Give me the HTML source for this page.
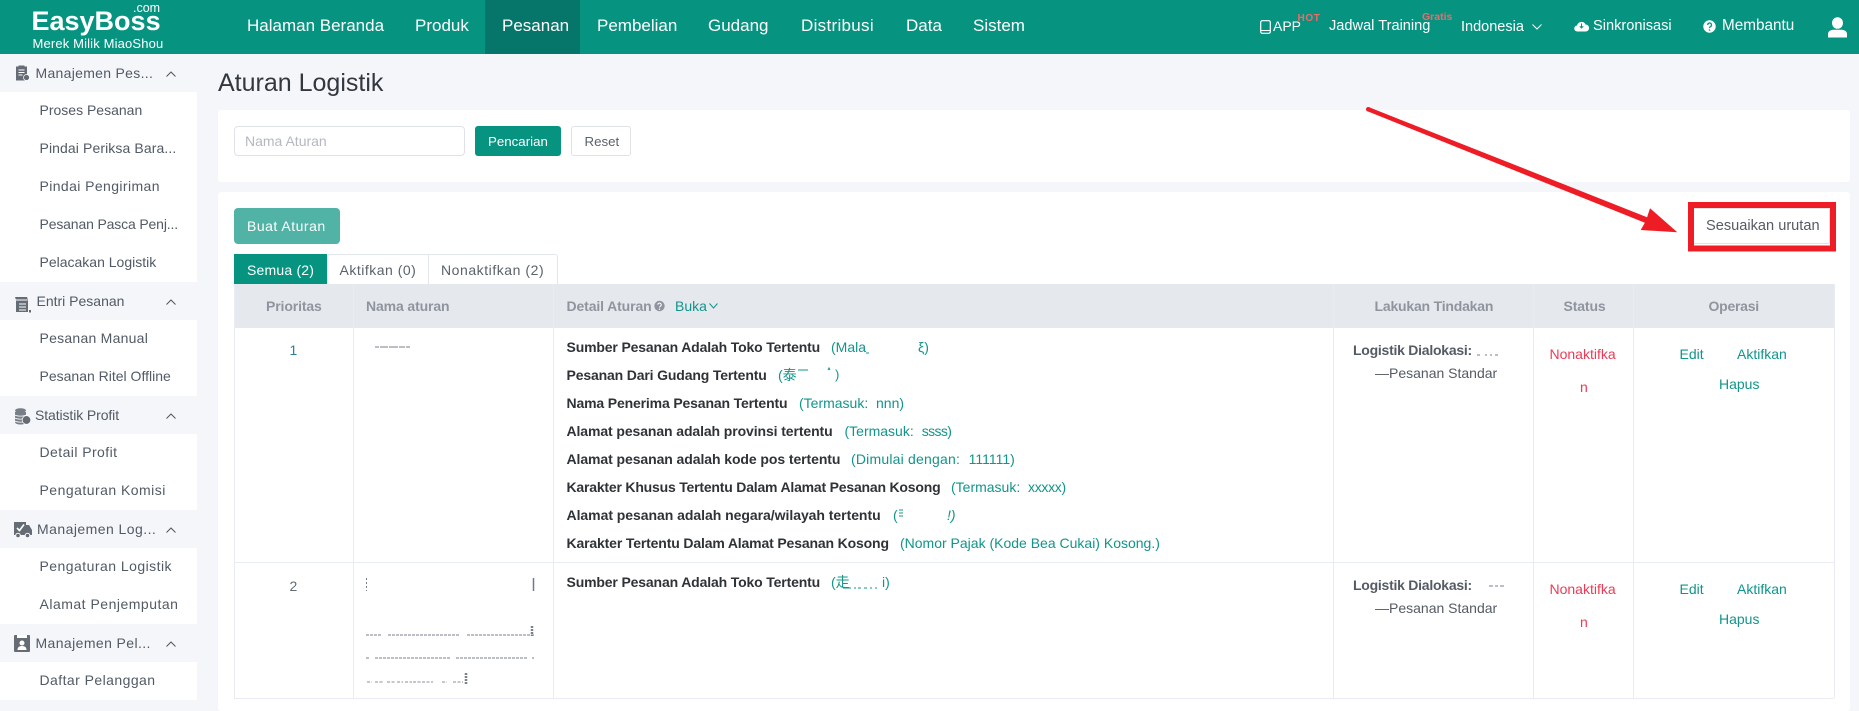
<!DOCTYPE html>
<html lang="id">
<head>
<meta charset="utf-8">
<title>Aturan Logistik</title>
<style>
*{box-sizing:border-box;margin:0;padding:0}
html,body{width:1859px;height:711px;overflow:hidden;background:#f5f6fa;font-family:"Liberation Sans","Noto Sans CJK SC",sans-serif;font-size:14px;color:#4e5661}
.a{position:absolute}
.t{position:absolute;white-space:nowrap;line-height:20px;height:20px}
.w{color:#fff}
.b{font-weight:700}
.g{color:#11958a}
.r{color:#ee3a55}
.h{font-weight:700;color:#90949e;letter-spacing:-.12px}
.d{color:#2f3338;font-weight:700;letter-spacing:-.15px}
.nav{font-size:17px;color:#fff}
.top{font-size:14.6px;color:#fff}
.card{background:#fff;border-radius:3px}
.grp{left:0;width:197px;height:38px;background:#f5f6fa}
.it{left:39.5px;color:#525a65}
.lb{color:#525a65}
.v{top:284px;width:1px;height:414px;background:#e9ecf3}
.hr{left:234px;width:1600px;height:1px;background:#e9ecf3}
svg{position:absolute;overflow:visible}
</style>
</head>
<body>
<!-- Header -->
<div class="a" style="left:0;top:0;width:1859px;height:54px;background:#069480"></div>
<div class="a" style="left:485px;top:0;width:95px;height:54px;background:#07766a"></div>
<div class="t w b" style="left:31.5px;top:8px;font-size:27px;line-height:26px;height:26px">EasyBoss</div>
<div class="t w" style="left:133px;top:-2px;font-size:12.500px">.com</div>
<div class="t w" style="left:32.500px;top:34px;font-size:13px;letter-spacing:.15px">Merek Milik MiaoShou</div>
<div class="t nav" style="left:247px;top:16px">Halaman Beranda</div>
<div class="t nav" style="left:415px;top:16px">Produk</div>
<div class="t nav" style="left:502px;top:16px">Pesanan</div>
<div class="t nav" style="left:597px;top:16px">Pembelian</div>
<div class="t nav" style="left:708px;top:16px">Gudang</div>
<div class="t nav" style="left:801px;top:16px;letter-spacing:.3px">Distribusi</div>
<div class="t nav" style="left:906px;top:16px">Data</div>
<div class="t nav" style="left:973px;top:16px">Sistem</div>

<svg style="left:1260px;top:20px" width="11" height="14" viewBox="0 0 11 14"><rect x=".7" y=".7" width="9.6" height="12.6" rx="1.500" fill="none" stroke="#fff" stroke-width="1.200"/><path d="M1 10.500h9" stroke="#fff"/></svg>
<div class="t top" style="left:1273px;top:16px;font-size:14px">APP</div>
<div class="t b" style="left:1297.500px;top:9px;font-size:10px;color:#ee6a6a;letter-spacing:.6px">HOT</div>
<div class="t top" style="left:1329px;top:16px">Jadwal Training</div>
<div class="t b" style="left:1422px;top:7px;font-size:10.500px;color:#ee6a6a">Gratis</div>
<div class="t top" style="left:1461px;top:17px;font-size:14.500px">Indonesia</div>
<svg style="left:1532px;top:24px" width="10" height="6" viewBox="0 0 10 6"><path d="M.5.500 5 5 9.500.500" fill="none" stroke="#fff"/></svg>
<svg style="left:1574px;top:20px" width="15" height="12" viewBox="0 0 15 12"><path d="M3.500 11.500a3 3 0 0 1-.5-6A4.600 4.600 0 0 1 11.600 4.500a3.500 3.500 0 0 1 0 7z" fill="#fff"/><path d="M7.500 3.500v4M5.800 6.200l1.700 1.800 1.700-1.800" stroke="#069480" fill="none"/></svg>
<div class="t top" style="left:1593px;top:16px">Sinkronisasi</div>
<svg style="left:1703px;top:20px" width="13" height="13" viewBox="0 0 13 13"><circle cx="6.500" cy="6.500" r="6.200" fill="#fff"/><path d="M4.700 5a1.900 1.900 0 1 1 2.800 1.600c-.7.400-1 .8-1 1.500" fill="none" stroke="#069480" stroke-width="1.300"/><circle cx="6.500" cy="10" r=".8" fill="#069480"/></svg>
<div class="t top" style="left:1722px;top:16px;font-size:15.300px">Membantu</div>
<svg style="left:1828px;top:16.500px" width="19" height="21" viewBox="0 0 19 21"><ellipse cx="9.500" cy="6" rx="5.500" ry="5.800" fill="#fff"/><path d="M0 20.500v-3.500C0 14 3 12.700 6 12.700h7c3 0 6 1.300 6 4.300v3.500z" fill="#fff"/></svg>

<!-- Sidebar -->
<div class="a" style="left:0;top:54px;width:197px;height:657px;background:#fff"></div>
<div class="a grp" style="top:54px"></div>
<div class="a grp" style="top:282px"></div>
<div class="a grp" style="top:396px"></div>
<div class="a grp" style="top:510px"></div>
<div class="a grp" style="top:624px"></div>
<div class="a grp" style="top:700px;height:11px"></div>

<svg style="left:14.500px;top:65px" width="15" height="16" viewBox="0 0 15 16"><path d="M1 1.500h2.500V.5h6v1H12v14H1z" fill="#666c75"/><path d="M3.500 5h6M3.500 7.500h6M3.500 10h4" stroke="#fff"/><circle cx="11.500" cy="12.500" r="3" fill="#666c75" stroke="#fff" stroke-width=".7"/></svg>
<div class="t lb" style="left:35.500px;top:63px;letter-spacing:.3px">Manajemen Pes...</div>
<svg style="left:14px;top:296px" width="17" height="17" viewBox="0 0 17 17"><path d="M1 1h12l1 3v12H2V4z" fill="#666c75"/><path d="M1.500 4h12M5 8h7M5 11h7M5 14h7" stroke="#fff"/><rect x="15" y="14" width="2" height="2.500" fill="#666c75"/></svg>
<div class="t lb" style="left:36.500px;top:291px">Entri Pesanan</div>
<svg style="left:14px;top:408px" width="17" height="17" viewBox="0 0 17 17"><ellipse cx="6.500" cy="2.500" rx="5.500" ry="2.300" fill="#787e87"/><path d="M1 4v10c0 1.500 2.500 2.500 5.500 2.500S12 15.500 12 14V4z" fill="#787e87"/><path d="M1 7c2 1.500 9 1.500 11 0M1 10c2 1.500 9 1.500 11 0M1 13c2 1.500 9 1.500 11 0" stroke="#fff" fill="none" stroke-width=".8"/><circle cx="12.500" cy="12" r="4.300" fill="#666c75" stroke="#fff" stroke-width=".7"/></svg>
<div class="t lb" style="left:35px;top:405px;letter-spacing:-.1px">Statistik Profit</div>
<svg style="left:14px;top:521px" width="18" height="17" viewBox="0 0 18 17"><path d="M0 1h12v3h3l3 5v5H0z" fill="#666c75"/><circle cx="4" cy="14.500" r="2.300" fill="#666c75" stroke="#f5f6fa"/><circle cx="13.500" cy="14.500" r="2.300" fill="#666c75" stroke="#f5f6fa"/><path d="M3 7l2.500 2.500L10 3.500" stroke="#fff" stroke-width="1.600" fill="none"/></svg>
<div class="t lb" style="left:37px;top:519px;letter-spacing:.45px">Manajemen Log...</div>
<svg style="left:14px;top:635px" width="16" height="17" viewBox="0 0 16 17"><rect width="16" height="17" rx="1" fill="#666c75"/><rect x="3" y="0" width="10" height="3" fill="#fff"/><circle cx="8" cy="8" r="2.500" fill="#fff"/><path d="M3.500 15c0-3 2-4 4.500-4s4.500 1 4.500 4z" fill="#fff"/></svg>
<div class="t lb" style="left:35.500px;top:633px;letter-spacing:.4px">Manajemen Pel...</div>

<svg style="left:166px;top:71px" width="10" height="6" viewBox="0 0 10 6"><path d="M.5 5.500 5 1l4.500 4.500" fill="none" stroke="#555"/></svg>
<svg style="left:166px;top:299px" width="10" height="6" viewBox="0 0 10 6"><path d="M.5 5.500 5 1l4.500 4.500" fill="none" stroke="#555"/></svg>
<svg style="left:166px;top:413px" width="10" height="6" viewBox="0 0 10 6"><path d="M.5 5.500 5 1l4.500 4.500" fill="none" stroke="#555"/></svg>
<svg style="left:166px;top:527px" width="10" height="6" viewBox="0 0 10 6"><path d="M.5 5.500 5 1l4.500 4.500" fill="none" stroke="#555"/></svg>
<svg style="left:166px;top:641px" width="10" height="6" viewBox="0 0 10 6"><path d="M.5 5.500 5 1l4.500 4.500" fill="none" stroke="#555"/></svg>

<div class="t it" style="top:100px">Proses Pesanan</div>
<div class="t it" style="top:138px;letter-spacing:.1px">Pindai Periksa Bara...</div>
<div class="t it" style="top:176px;letter-spacing:.4px">Pindai Pengiriman</div>
<div class="t it" style="top:214px;letter-spacing:-.15px">Pesanan Pasca Penj...</div>
<div class="t it" style="top:252px">Pelacakan Logistik</div>
<div class="t it" style="top:328px;letter-spacing:.25px">Pesanan Manual</div>
<div class="t it" style="top:366px">Pesanan Ritel Offline</div>
<div class="t it" style="top:442px;letter-spacing:.43px">Detail Profit</div>
<div class="t it" style="top:480px;letter-spacing:.47px">Pengaturan Komisi</div>
<div class="t it" style="top:556px;letter-spacing:.46px">Pengaturan Logistik</div>
<div class="t it" style="top:594px;letter-spacing:.5px">Alamat Penjemputan</div>
<div class="t it" style="top:670px;letter-spacing:.44px">Daftar Pelanggan</div>

<!-- Main -->
<div class="t" style="left:218px;top:73px;font-size:25px;color:#33383f">Aturan Logistik</div>
<div class="a card" style="left:218px;top:110px;width:1632px;height:72px"></div>
<div class="a card" style="left:218px;top:192px;width:1632px;height:519px"></div>

<div class="a" style="left:234px;top:126px;width:231px;height:30px;border:1px solid #dfe2e8;border-radius:4px;background:#fff"></div>
<div class="t" style="left:245px;top:131px;color:#b4b8bf">Nama Aturan</div>
<div class="a" style="left:475px;top:126px;width:86px;height:30px;background:#069480;border-radius:3px"></div>
<div class="t w" style="left:488px;top:132px;font-size:13.300px">Pencarian</div>
<div class="a" style="left:571px;top:126px;width:60px;height:30px;border:1px solid #dfe2e8;border-radius:3px;background:#fff"></div>
<div class="t" style="left:584.500px;top:132px;font-size:13.300px;color:#5c626b">Reset</div>

<div class="a" style="left:234px;top:208px;width:106px;height:36px;background:#50b3a6;border-radius:4px"></div>
<div class="t w" style="left:247px;top:216px;letter-spacing:.5px">Buat Aturan</div>

<div class="a" style="left:1693px;top:208px;width:137px;height:36px;border:1px solid #dfe2e8;border-radius:2px;background:#fff"></div>
<div class="t" style="left:1706px;top:216px;font-size:14.600px;color:#555b64">Sesuaikan urutan</div>

<!-- Tabs -->
<div class="a" style="left:327px;top:254px;width:231px;height:30px;border:1px solid #e3e6eb;border-bottom:0;border-radius:0 3px 0 0;background:#fff"></div>
<div class="a" style="left:428px;top:254px;width:1px;height:30px;background:#e3e6eb"></div>
<div class="a" style="left:234px;top:254px;width:93px;height:30px;background:#069480"></div>
<div class="t w" style="left:247px;top:260px;letter-spacing:.2px">Semua (2)</div>
<div class="t" style="left:339.500px;top:260px;color:#5c626b;letter-spacing:.5px">Aktifkan (0)</div>
<div class="t" style="left:441px;top:260px;color:#5c626b;letter-spacing:.55px">Nonaktifkan (2)</div>

<!-- Table -->
<div class="a" style="left:234px;top:284px;width:1600px;height:44px;background:#e5e8ed"></div>
<div class="a v" style="left:234px"></div>
<div class="a v" style="left:353px"></div>
<div class="a v" style="left:553px"></div>
<div class="a v" style="left:1333px"></div>
<div class="a v" style="left:1533px"></div>
<div class="a v" style="left:1633px"></div>
<div class="a v" style="left:1834px"></div>
<div class="a hr" style="top:562px"></div>
<div class="a hr" style="top:698px"></div>

<div class="t h" style="left:266px;top:296px">Prioritas</div>
<div class="t h" style="left:366px;top:296px">Nama aturan</div>
<div class="t h" style="left:566.500px;top:296px">Detail Aturan</div>
<svg style="left:654px;top:300px" width="11" height="12" viewBox="0 0 11 12"><circle cx="5.500" cy="6" r="5.200" fill="#90949e"/><path d="M3.800 4.800a1.700 1.700 0 1 1 2.500 1.500c-.5.300-.8.600-.8 1.200" fill="none" stroke="#fff"/><circle cx="5.500" cy="9.200" r=".7" fill="#fff"/></svg>
<div class="t g" style="left:675px;top:296px">Buka</div>
<svg style="left:709px;top:303px" width="9" height="6" viewBox="0 0 9 6"><path d="M.5.500 4.500 5 8.500.500" fill="none" stroke="#11958a"/></svg>
<div class="t h" style="left:1374.500px;top:296px;letter-spacing:-.2px">Lakukan Tindakan</div>
<div class="t h" style="left:1563.500px;top:296px">Status</div>
<div class="t h" style="left:1708.500px;top:296px;letter-spacing:-.25px">Operasi</div>

<div class="t" style="left:289.500px;top:340px;color:#2f7f9a">1</div>
<div class="t" style="left:289.500px;top:575.500px;color:#666c75">2</div>

<div class="t d" style="left:566.500px;top:337px">Sumber Pesanan Adalah Toko Tertentu</div>
<div class="t g" style="left:831px;top:337px">(Mala</div><div class="t g" style="left:918px;top:337px">ξ)</div>
<div class="t d" style="left:566.500px;top:365px">Pesanan Dari Gudang Tertentu</div>
<div class="t g" style="left:778px;top:365px">(泰</div><div class="t g" style="left:835px;top:365px;font-size:13px">)</div>
<div class="t d" style="left:566.500px;top:393px">Nama Penerima Pesanan Tertentu</div>
<div class="t g" style="left:799px;top:393px">(Termasuk:</div><div class="t g" style="left:876px;top:393px">nnn)</div>
<div class="t d" style="left:566.500px;top:421px;letter-spacing:-.1px">Alamat pesanan adalah provinsi tertentu</div>
<div class="t g" style="left:844.500px;top:421px">(Termasuk:</div><div class="t g" style="left:921.700px;top:421px;letter-spacing:-.6px">ssss)</div>
<div class="t d" style="left:566.500px;top:449px;letter-spacing:-.08px">Alamat pesanan adalah kode pos tertentu</div>
<div class="t g" style="left:851px;top:449px;letter-spacing:.2px">(Dimulai dengan:</div><div class="t g" style="left:968.600px;top:449px">111111)</div>
<div class="t d" style="left:566.500px;top:477px;letter-spacing:-.2px">Karakter Khusus Tertentu Dalam Alamat Pesanan Kosong</div>
<div class="t g" style="left:951px;top:477px">(Termasuk:</div><div class="t g" style="left:1028px;top:477px;letter-spacing:-.3px">xxxxx)</div>
<div class="t d" style="left:566.500px;top:505px;letter-spacing:-.04px">Alamat pesanan adalah negara/wilayah tertentu</div>
<div class="t g" style="left:893px;top:505px">(</div><div class="t g" style="left:947px;top:505px;font-style:italic">!)</div>
<div class="t d" style="left:566.500px;top:533px">Karakter Tertentu Dalam Alamat Pesanan Kosong</div>
<div class="t g" style="left:900px;top:533px">(Nomor Pajak (Kode Bea Cukai) Kosong.)</div>
<div class="t d" style="left:566.500px;top:572px">Sumber Pesanan Adalah Toko Tertentu</div>
<div class="t g" style="left:831px;top:572px">(走</div><div class="t g" style="left:882px;top:572px">i)</div>

<div class="t b" style="left:1353px;top:340px;color:#555b64;letter-spacing:-.25px">Logistik Dialokasi:</div>
<div class="t" style="left:1375px;top:363px;color:#555b64">—Pesanan Standar</div>
<div class="t b" style="left:1353px;top:575px;color:#555b64;letter-spacing:-.25px">Logistik Dialokasi:</div>
<div class="t" style="left:1375px;top:598px;color:#555b64">—Pesanan Standar</div>

<div class="t r" style="left:1549.500px;top:344px">Nonaktifka</div>
<div class="t r" style="left:1580px;top:377px">n</div>
<div class="t r" style="left:1549.500px;top:579px">Nonaktifka</div>
<div class="t r" style="left:1580px;top:612px">n</div>

<div class="t g" style="left:1679.500px;top:344px">Edit</div>
<div class="t g" style="left:1737px;top:344px">Aktifkan</div>
<div class="t g" style="left:1719px;top:374px">Hapus</div>
<div class="t g" style="left:1679.500px;top:579px">Edit</div>
<div class="t g" style="left:1737px;top:579px">Aktifkan</div>
<div class="t g" style="left:1719px;top:609px">Hapus</div>

<!-- Overlay: redaction fragments and red annotation -->
<svg style="left:0;top:0" width="1859" height="711" viewBox="0 0 1859 711">
<g fill="none" stroke="#7a818c" stroke-width="1">
<path d="M375 347h35" stroke-dasharray="4 1 8 1 9 1 6 1"/>
<path d="M366.500 578v13" stroke-dasharray="2 2"/>
<path d="M533.500 578v13" stroke="#6b7c90" stroke-width="1.500"/>
<path d="M366 635h16M388 635h72M467 635h67" stroke-dasharray="3 1"/>
<path d="M366 658h4M375 658h75M456 658h72M532 658h2" stroke-dasharray="3 1"/>
<path d="M367 682h5M375 682h8M387 682h8M397 682h6M405 682h7M413 682h20M442 682h5M453 682h10" stroke-dasharray="3 1.500" stroke="#8a909a"/>
<path d="M466 673v12" stroke-width="2.500" stroke-dasharray="2 1"/>
<path d="M532 626v10" stroke-width="2.500" stroke-dasharray="2 1"/>
<path d="M1477 355h25" stroke-dasharray="3 5 2 3 2 3"/>
<path d="M1489 586h17" stroke-dasharray="4 2 3 2 4 2"/>
</g>
<g fill="none" stroke="#11958a" stroke-width="1">
<path d="M866 353l3 0"/>
<path d="M798 370h10M828 370l1-2 1 2"/>
<path d="M899 510h4M899 513h4M899 516h4"/>
<path d="M843 588h8M854 588h2M858 588h3M864 588h3M870 588h2M875 588h2"/>
</g>
<rect x="1691" y="205" width="142" height="43.500" fill="none" stroke="#ee1c25" stroke-width="6"/>
<polygon fill="#ee1c25" points="1369.100,107.300 1647.100,217.200 1650,208.300 1677.300,232.300 1640.700,230 1644.900,222.800 1367.500,111.300"/>
<circle cx="1368.300" cy="109.300" r="2.300" fill="#ee1c25"/>
</svg>
</body>
</html>
